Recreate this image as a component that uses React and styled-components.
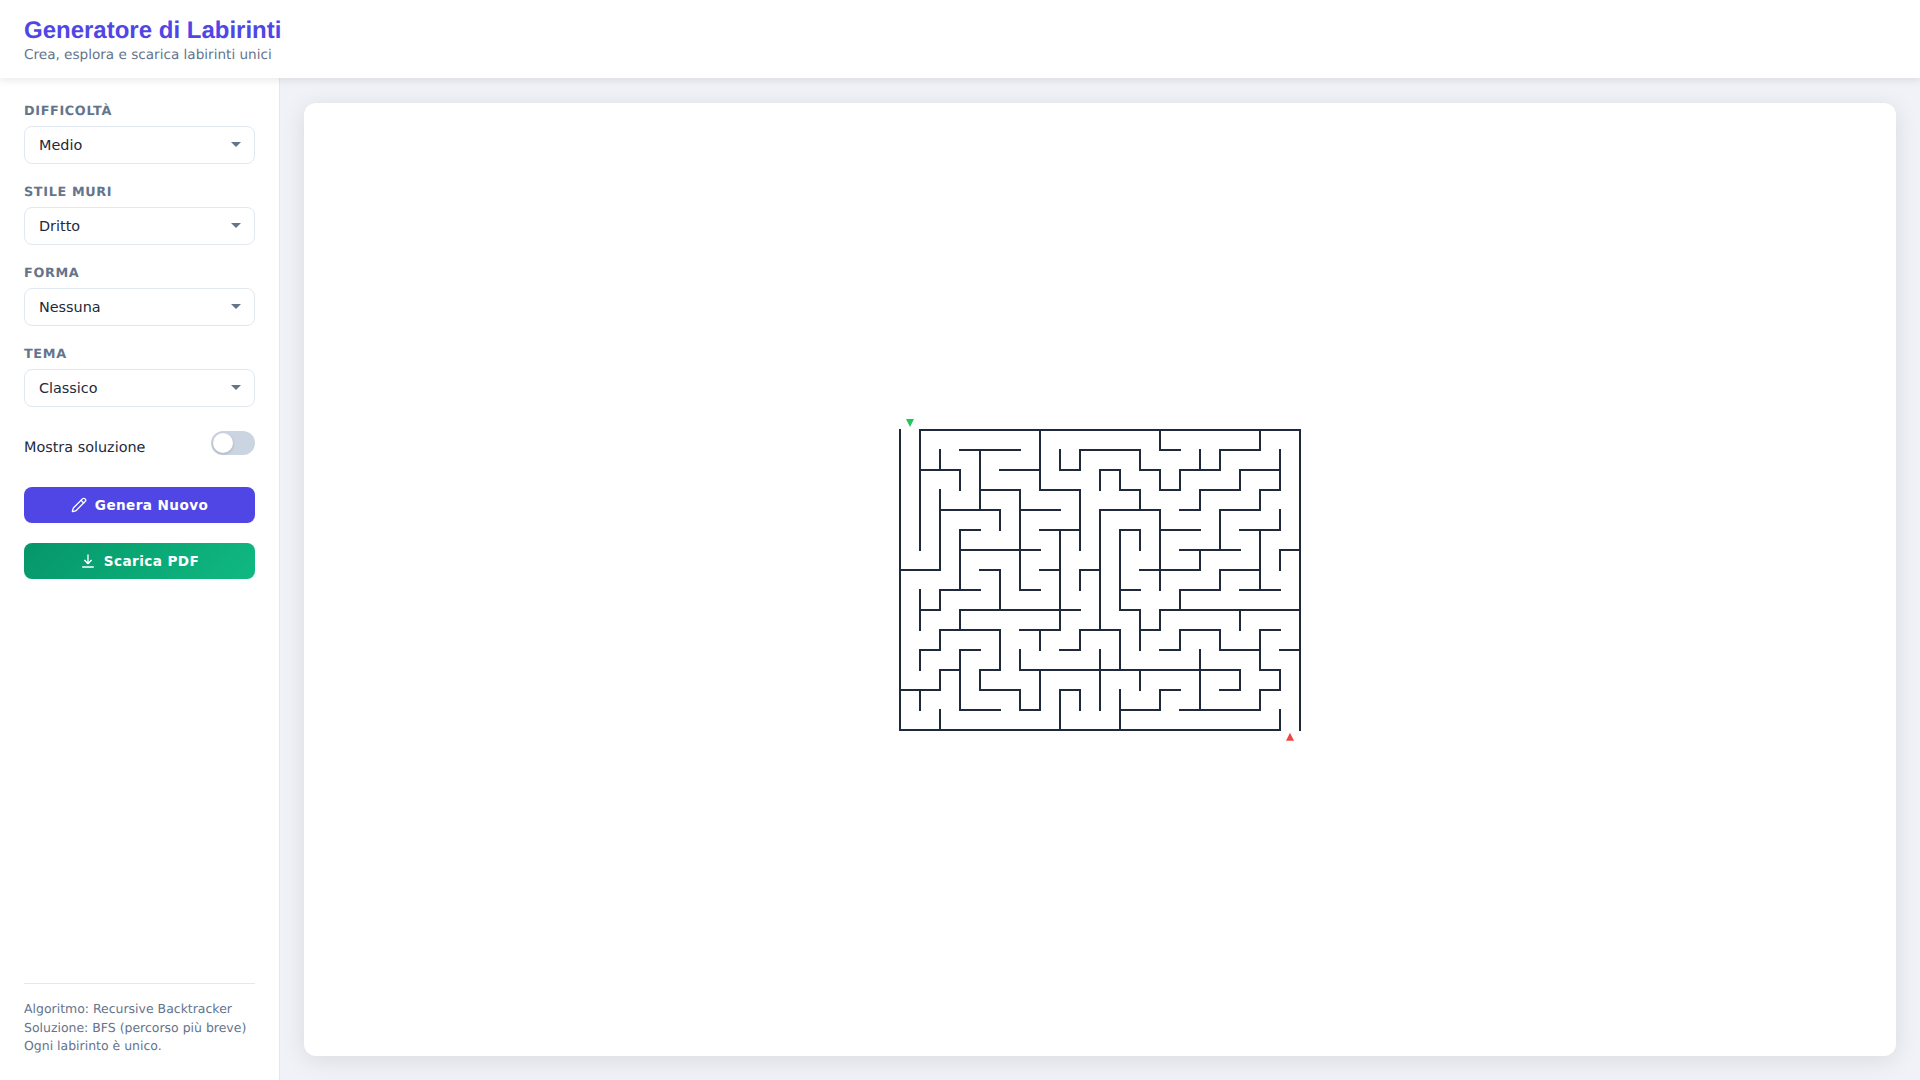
import styled, { createGlobalStyle } from "styled-components";
import { Pencil } from "lucide-react";

const GlobalStyle = createGlobalStyle`
  * {
    box-sizing: border-box;
  }
  html, body, #root {
    height: 100%;
    margin: 0;
  }
  body {
    font-family: "DejaVu Sans", sans-serif;
    color: #1e293b;
    background: #f0f2f7;
    text-rendering: geometricPrecision;
  }
`;

const Page = styled.div`
  height: 100vh;
  display: flex;
  flex-direction: column;
  overflow: hidden;
`;
const Header = styled.header`
  position: relative;
  z-index: 2;
  height: 78px;
  flex-shrink: 0;
  background: #ffffff;
  padding: 17px 24px 0;
  box-shadow: 0 2px 8px rgba(15, 23, 42, 0.1);
`;
const Title = styled.h1`
  margin: 0;
  font-family: "Liberation Sans", Arial, sans-serif;
  font-size: 24px;
  line-height: 28px;
  font-weight: 700;
  color: #4f46e5;
`;
const Subtitle = styled.p`
  margin: 2px 0 0;
  font-size: 13.6px;
  line-height: 16px;
  color: #64748b;
`;
const Body = styled.div`
  flex: 1;
  display: flex;
  min-height: 0;
`;
const Sidebar = styled.aside`
  width: 280px;
  flex-shrink: 0;
  display: flex;
  flex-direction: column;
  background: #ffffff;
  border-right: 1px solid #e2e8f0;
  padding: 26px 24px 24px;
`;
const Field = styled.div`
  margin-bottom: 21px;
`;
const FieldLabel = styled.label`
  display: block;
  margin-bottom: 7px;
  font-size: 12.8px;
  line-height: 15px;
  font-weight: 700;
  letter-spacing: 0.64px;
  text-transform: uppercase;
  color: #64748b;
`;
const SelectWrap = styled.div`
  position: relative;
  &::after {
    content: "";
    position: absolute;
    top: 16px;
    right: 14px;
    border-left: 5px solid transparent;
    border-right: 5px solid transparent;
    border-top: 5px solid #64748b;
    pointer-events: none;
  }
`;
const Select = styled.select`
  display: block;
  width: 100%;
  height: 38px;
  padding: 0 14px;
  appearance: none;
  background: #ffffff;
  border: 1px solid #e2e8f0;
  border-radius: 8px;
  font-family: inherit;
  font-size: 14.4px;
  color: #1e293b;
`;
const ToggleRow = styled.div`
  display: flex;
  align-items: center;
  justify-content: space-between;
  margin: 3px 0 32px;
  height: 24px;
`;
const ToggleLabel = styled.span`
  font-size: 14.4px;
  position: relative;
  top: 5px;
`;
const Toggle = styled.span`
  position: relative;
  width: 44px;
  height: 24px;
  border-radius: 12px;
  background: #cbd5e1;
  &::before {
    content: "";
    position: absolute;
    top: 2px;
    left: 2px;
    width: 20px;
    height: 20px;
    border-radius: 50%;
    background: #ffffff;
    box-shadow: 0 1px 3px rgba(0, 0, 0, 0.2);
  }
`;
const Button = styled.button`
  display: flex;
  align-items: center;
  justify-content: center;
  gap: 8px;
  width: 100%;
  height: 36px;
  margin-bottom: 20px;
  border: none;
  border-radius: 8px;
  font-family: inherit;
  font-size: 13.6px;
  font-weight: 700;
  letter-spacing: 0.4px;
  color: #ffffff;
  background: ${(p) =>
    p.$variant === "green"
      ? "linear-gradient(135deg, #059669, #10b981)"
      : "#4f46e5"};
`;
const Notes = styled.div`
  margin-top: auto;
  border-top: 1px solid #e2e8f0;
  padding-top: 16px;
  font-size: 12.48px;
  line-height: 18.72px;
  color: #64748b;
`;
const Main = styled.main`
  flex: 1;
  min-width: 0;
  padding: 25px 24px 24px;
  display: flex;
`;
const Card = styled.div`
  flex: 1;
  display: flex;
  align-items: center;
  justify-content: center;
  background: #ffffff;
  border-radius: 12px;
  box-shadow: 0 4px 24px rgba(15, 23, 42, 0.1);
`;

const CELL = 20;

// [axis, fixed line, from, to] in cells
const WALLS = [
  ["v", 0, 0, 15], ["h", 0, 1, 20], ["v", 20, 0, 15], ["h", 15, 0, 19],
  ["h", 7, 0, 2], ["v", 2, 3, 7], ["v", 1, 0, 6], ["v", 2, 1, 2],
  ["h", 2, 1, 3], ["v", 3, 2, 3], ["h", 1, 3, 6], ["v", 4, 1, 4],
  ["h", 2, 5, 7], ["v", 7, 0, 3], ["h", 3, 7, 9], ["v", 9, 3, 6],
  ["v", 8, 1, 2], ["h", 2, 8, 9], ["v", 9, 1, 2], ["h", 1, 9, 12],
  ["h", 3, 4, 6], ["v", 6, 3, 8], ["h", 4, 2, 5], ["v", 5, 4, 5],
  ["h", 4, 6, 8], ["h", 5, 7, 9], ["v", 8, 5, 10], ["h", 5, 3, 4],
  ["v", 3, 5, 8], ["h", 6, 3, 7], ["h", 7, 4, 5], ["h", 7, 7, 8],
  ["h", 7, 9, 10], ["v", 10, 4, 10],
  ["v", 13, 0, 1], ["h", 1, 13, 14], ["v", 18, 0, 1], ["h", 1, 16, 18],
  ["v", 16, 1, 2], ["h", 2, 14, 16], ["v", 15, 1, 2], ["v", 14, 2, 3],
  ["h", 3, 13, 14], ["v", 13, 2, 3], ["h", 2, 12, 13], ["v", 12, 1, 2],
  ["h", 2, 10, 11], ["v", 10, 2, 3], ["v", 11, 2, 3], ["h", 3, 11, 12],
  ["v", 12, 3, 4], ["h", 4, 10, 13], ["v", 13, 4, 8], ["h", 5, 11, 12],
  ["v", 11, 5, 8], ["v", 12, 5, 6], ["h", 3, 15, 17], ["v", 17, 2, 3],
  ["h", 2, 17, 19], ["v", 19, 1, 3], ["h", 3, 18, 19], ["v", 18, 3, 4],
  ["h", 4, 16, 18], ["v", 16, 4, 6], ["v", 15, 3, 4], ["h", 4, 14, 15],
  ["v", 19, 4, 5], ["h", 5, 17, 19], ["v", 18, 5, 8], ["h", 5, 13, 15],
  ["h", 6, 14, 17], ["v", 15, 6, 7], ["h", 6, 19, 20], ["v", 19, 6, 7],
  ["h", 7, 12, 15], ["h", 7, 16, 18],
  ["v", 3, 7, 8], ["h", 8, 2, 4], ["v", 2, 8, 9], ["h", 9, 1, 2],
  ["v", 1, 8, 10], ["v", 5, 7, 9], ["v", 6, 7, 8], ["h", 8, 6, 7],
  ["h", 9, 3, 9], ["v", 3, 9, 10], ["h", 10, 2, 5], ["v", 2, 10, 11],
  ["h", 11, 1, 2], ["v", 1, 11, 12], ["v", 5, 10, 12], ["h", 12, 4, 5],
  ["v", 4, 12, 13], ["h", 13, 4, 6], ["v", 6, 13, 14], ["h", 14, 6, 7],
  ["v", 7, 12, 14], ["h", 10, 6, 8], ["v", 7, 10, 11], ["h", 11, 3, 4],
  ["v", 3, 11, 14], ["h", 14, 3, 5], ["h", 12, 2, 3], ["v", 2, 12, 13],
  ["h", 13, 0, 2], ["v", 1, 13, 14], ["v", 2, 14, 15], ["v", 6, 11, 12],
  ["h", 12, 6, 17], ["h", 11, 8, 9], ["v", 9, 10, 11], ["h", 10, 9, 11],
  ["v", 9, 7, 8], ["v", 10, 11, 14], ["h", 13, 8, 9], ["v", 8, 13, 15],
  ["v", 9, 13, 14], ["v", 11, 10, 12], ["v", 11, 7, 9], ["h", 8, 11, 12],
  ["h", 9, 11, 12], ["v", 12, 9, 11], ["h", 10, 12, 13], ["v", 13, 9, 10],
  ["h", 9, 13, 20], ["v", 14, 8, 9], ["h", 8, 14, 16], ["v", 16, 7, 8],
  ["v", 13, 7, 8], ["h", 8, 17, 19], ["v", 17, 9, 10], ["h", 10, 14, 16],
  ["v", 14, 10, 11], ["h", 11, 13, 14], ["v", 16, 10, 11], ["h", 11, 16, 18],
  ["v", 18, 10, 12], ["h", 10, 18, 19], ["h", 11, 19, 20], ["h", 12, 18, 19],
  ["v", 19, 12, 13], ["h", 13, 18, 19], ["v", 18, 13, 14], ["v", 17, 12, 13],
  ["h", 13, 16, 17], ["v", 15, 11, 14], ["v", 12, 12, 13], ["h", 13, 13, 14],
  ["v", 13, 13, 14], ["h", 14, 11, 13], ["v", 11, 13, 15], ["h", 14, 14, 18],
  ["v", 19, 14, 15],
];

const Maze = () => {
  const d = WALLS.map(([axis, line, from, to]) =>
    axis === "h"
      ? `M${from * CELL} ${line * CELL}H${to * CELL}`
      : `M${line * CELL} ${from * CELL}V${to * CELL}`
  ).join("");
  return (
    <svg width="412" height="324" viewBox="-6 -12 412 324">
      <path d={d} fill="none" stroke="#1e293b" strokeWidth="2" strokeLinecap="square" />
      <path d="M6 -11H14L10 -3Z" fill="#22c55e" />
      <path d="M386 310.7H394L390 302.7Z" fill="#ef4444" />
    </svg>
  );
};

const DownloadIcon = () => (
  <svg width="16" height="16" viewBox="0 0 24 24" fill="none" stroke="currentColor" strokeWidth="2" strokeLinecap="round" strokeLinejoin="round">
    <path d="M12 3v13M7 11l5 5 5-5M4 21h16" />
  </svg>
);

const App = () => {
  return (
    <Page>
      <GlobalStyle />
      <Header>
        <Title>Generatore di Labirinti</Title>
        <Subtitle>Crea, esplora e scarica labirinti unici</Subtitle>
      </Header>
      <Body>
        <Sidebar>
          <Field>
            <FieldLabel>Difficoltà</FieldLabel>
            <SelectWrap>
              <Select defaultValue="Medio">
                <option>Medio</option>
              </Select>
            </SelectWrap>
          </Field>
          <Field>
            <FieldLabel>Stile muri</FieldLabel>
            <SelectWrap>
              <Select defaultValue="Dritto">
                <option>Dritto</option>
              </Select>
            </SelectWrap>
          </Field>
          <Field>
            <FieldLabel>Forma</FieldLabel>
            <SelectWrap>
              <Select defaultValue="Nessuna">
                <option>Nessuna</option>
              </Select>
            </SelectWrap>
          </Field>
          <Field>
            <FieldLabel>Tema</FieldLabel>
            <SelectWrap>
              <Select defaultValue="Classico">
                <option>Classico</option>
              </Select>
            </SelectWrap>
          </Field>
          <ToggleRow>
            <ToggleLabel>Mostra soluzione</ToggleLabel>
            <Toggle />
          </ToggleRow>
          <Button>
            <Pencil size={16} />
            Genera Nuovo
          </Button>
          <Button $variant="green">
            <DownloadIcon />
            Scarica PDF
          </Button>
          <Notes>
            Algoritmo: Recursive Backtracker
            <br />
            Soluzione: BFS (percorso più breve)
            <br />
            Ogni labirinto è unico.
          </Notes>
        </Sidebar>
        <Main>
          <Card>
            <Maze />
          </Card>
        </Main>
      </Body>
    </Page>
  );
};

export default App;
